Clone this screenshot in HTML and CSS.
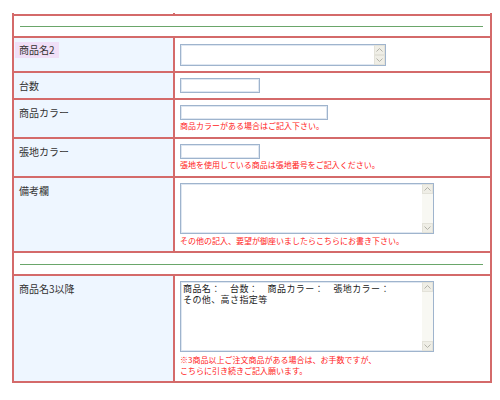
FILE: index.html
```html
<!DOCTYPE html>
<html lang="ja">
<head>
    <meta charset="UTF-8">
    <meta name="viewport" content="width=device-width, initial-scale=1.0">
    <title>ご注文フォーム</title>
    <link rel="stylesheet" href="styles.css">
</head>
<body>

<div class="page">
    <table class="order">
        <!-- 上の行の続き -->
        <tr class="cut"><td class="label"></td><td class="field"></td></tr>

        <tr><td colspan="2" class="rule"><div class="line"></div></td></tr>

        <tr>
            <td class="label label-hl"><span class="hl">商品名2</span></td>
            <td class="field field-top">
                <div class="memo memo-s">
                    <textarea name="item2"></textarea>
                    <div class="bar">
                        <span class="btn"><svg width="7" height="4" viewBox="0 0 7 4"><path d="M0.5 3.5 L3.5 0.5 L6.5 3.5"/></svg></span>
                        <span class="btn"><svg width="7" height="4" viewBox="0 0 7 4"><path d="M0.5 0.5 L3.5 3.5 L6.5 0.5"/></svg></span>
                    </div>
                </div>
            </td>
        </tr>

        <tr>
            <td class="label">台数</td>
            <td class="field"><input type="text" class="text text-s" name="qty2"></td>
        </tr>

        <tr>
            <td class="label">商品カラー</td>
            <td class="field field-b">
                <input type="text" class="text text-m" name="color2">
                <div class="note">商品カラーがある場合はご記入下さい。</div>
            </td>
        </tr>

        <tr>
            <td class="label">張地カラー</td>
            <td class="field field-b">
                <input type="text" class="text text-s" name="fabric2">
                <div class="note">張地を使用している商品は張地番号をご記入ください。</div>
            </td>
        </tr>

        <tr>
            <td class="label">備考欄</td>
            <td class="field">
                <div class="memo memo-m">
                    <textarea name="memo"></textarea>
                    <div class="bar">
                        <span class="btn"><svg width="7" height="4" viewBox="0 0 7 4"><path d="M0.5 3.5 L3.5 0.5 L6.5 3.5"/></svg></span>
                        <span class="btn"><svg width="7" height="4" viewBox="0 0 7 4"><path d="M0.5 0.5 L3.5 3.5 L6.5 0.5"/></svg></span>
                    </div>
                </div>
                <div class="note">その他の記入、要望が御座いましたらこちらにお書き下さい。</div>
            </td>
        </tr>

        <tr><td colspan="2" class="rule rule-2"><div class="line"></div></td></tr>

        <tr>
            <td class="label">商品名3以降</td>
            <td class="field">
                <div class="memo memo-l">
                    <textarea name="item3">商品名：　台数：　商品カラー：　張地カラー：
その他、高さ指定等</textarea>
                    <div class="bar">
                        <span class="btn"><svg width="7" height="4" viewBox="0 0 7 4"><path d="M0.5 3.5 L3.5 0.5 L6.5 3.5"/></svg></span>
                        <span class="btn"><svg width="7" height="4" viewBox="0 0 7 4"><path d="M0.5 0.5 L3.5 3.5 L6.5 0.5"/></svg></span>
                    </div>
                </div>
                <div class="note">※3商品以上ご注文商品がある場合は、お手数ですが、<br>こちらに引き続きご記入願います。</div>
            </td>
        </tr>
    </table>
</div>

</body>
</html>
```

FILE: styles.css
```css
body {
    margin: 0;
    background: #fff;
    color: #333;
    font-family: "Noto Sans CJK JP", sans-serif;
}

.page {
    padding: 13px 0 0 12px;
}

.order {
    border-collapse: collapse;
    width: 480px;
}

.order td {
    border: 2px solid #d46a6a;
    vertical-align: top;
    padding: 0;
}

/* 項目名 */
.label {
    width: 154px;
    background: #eef6ff;
    padding: 7px 0 0 5px !important;
    font-size: 10px;
    line-height: 12px;
}

.label-hl {
    padding-top: 4px !important;
}

.hl {
    display: inline-block;
    background: #f0dff7;
    padding: 2px 4px;
    margin-left: -4px;
}

/* 入力欄 */
.field {
    padding: 5px 0 5px 5px !important;
}

.field-top {
    padding-top: 6px !important;
}

.field-b {
    padding-bottom: 6px !important;
}

.cut td {
    border-top: none;
    height: 1px;
    padding: 0 !important;
    background: #fff;
}

.rule {
    background: #fff;
    padding: 10px 7px 9px 6px !important;
}

.rule-2 {
    padding-top: 11px !important;
}

.line {
    height: 1px;
    background: #6aa66a;
}

.text {
    display: block;
    box-sizing: border-box;
    height: 15px;
    margin: 0;
    padding: 0 2px;
    border: 1px solid #9fb4cd;
    box-shadow: inset 0 0 0 1px #dfe7f1;
    background: #fff;
    font-size: 9px;
}

.text-s { width: 80px; }
.text-m { width: 148px; }

.note {
    color: #ff2222;
    font-size: 8px;
    line-height: 11px;
    white-space: nowrap;
}

/* テキストエリア（旧式スクロールバー付き） */
.memo {
    display: flex;
    box-sizing: border-box;
    border: 1px solid #9fb4cd;
    box-shadow: inset 0 0 0 1px #dfe7f1;
    background: #fff;
}

.memo-s { width: 206px; height: 22px; }
.memo-m { width: 254px; height: 51px; margin-bottom: 1px; }
.memo-l { width: 254px; height: 71px; margin-bottom: 2px; }

.memo textarea {
    flex: 1;
    border: none;
    outline: none;
    resize: none;
    overflow: hidden;
    margin: 0;
    padding: 1px 2px;
    background: transparent;
    color: #222;
    font-family: "Noto Sans CJK JP", sans-serif;
    font-size: 9px;
    line-height: 11px;
    letter-spacing: 0.4px;
}

.bar {
    width: 11px;
    display: flex;
    flex-direction: column;
    justify-content: space-between;
    background: #f8f8f3;
}

.btn {
    height: 10px;
    box-sizing: border-box;
    display: flex;
    align-items: center;
    justify-content: center;
    background: #efeee6;
    border: 1px solid #e3e2d9;
}

.btn path {
    fill: none;
    stroke: #b3b3aa;
    stroke-width: 1;
}
```
